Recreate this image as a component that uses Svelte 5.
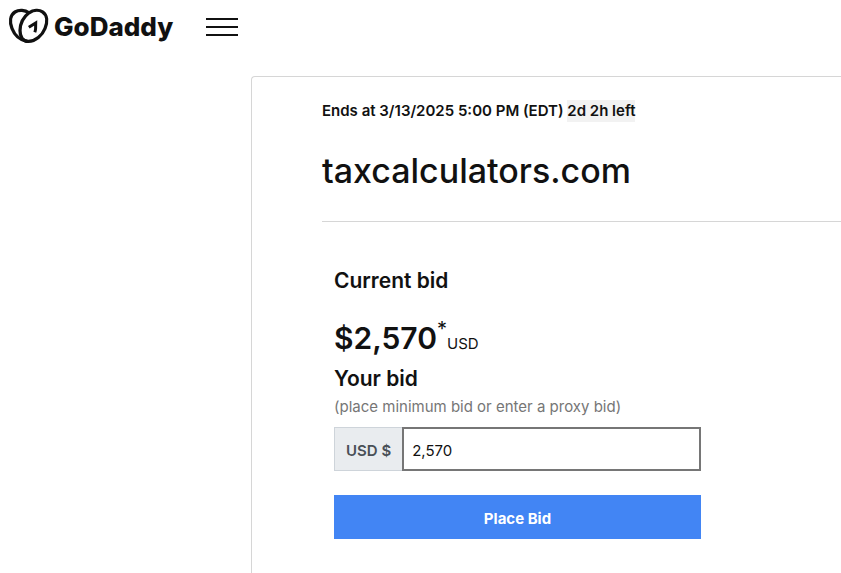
<script>
  let bid = '2,570'
</script>

<header>
  <a class="logo" href="/" aria-label="GoDaddy">
    <svg width="41" height="36" viewBox="0 0 41 36" fill="none" stroke="#111" stroke-width="3.300">
      <path d="M21 4.800C17 2 11 1.500 7 4C2 7.200 1.500 14 4 20.500C6.300 26.500 11.500 32 19 33.300" />
      <path d="M20.500 33.400C15 33.400 11.900 29 12 22.500C12.200 15.500 15.500 9 21 4.800C25.500 1.800 31 1.500 34.500 3.800C39.500 7.100 39.600 14 37 20.500C34.200 27.500 27.500 33.400 20.500 33.400Z" />
      <path d="M20.800 19.300L27.700 15L27.600 20.500C27.500 22 27.300 23 26.800 24.300" stroke-width="3" />
    </svg>
    <span>GoDaddy</span>
  </a>
  <button class="menu" aria-label="Menu">
    <i></i><i></i><i></i>
  </button>
</header>

<main>
  <div class="ends">Ends at 3/13/2025 5:00 PM (EDT) <mark>2d 2h left</mark></div>
  <h1>taxcalculators.com</h1>
  <hr />
  <form on:submit|preventDefault>
    <h2>Current bid</h2>
    <div class="price">
      <strong>$2,570</strong><span class="star">*</span><span class="currency">USD</span>
    </div>
    <h2><label for="bid">Your bid</label></h2>
    <p>(place minimum bid or enter a proxy bid)</p>
    <div class="group">
      <span class="prefix">USD $</span>
      <input id="bid" type="text" bind:value={bid} />
    </div>
    <button class="place">Place Bid</button>
  </form>
</main>

<style>
  :global(body) {
    background: #fff;
    color: #111;
    font-family: Inter, "Liberation Sans", sans-serif;
    font-size: 15px;
    overflow-x: hidden;
  }
  header {
    display: flex;
    align-items: center;
    gap: 33px;
    height: 54px;
    padding-left: 8px;
  }
  .logo {
    display: flex;
    align-items: center;
    gap: 5px;
    color: #111;
    text-decoration: none;
    font-size: 26px;
    font-weight: 800;
    line-height: 32px;
  }
  .logo svg {
    margin-bottom: 2px;
  }
  .menu {
    display: flex;
    flex-direction: column;
    gap: 6px;
    width: 32px;
    padding: 0;
    border: 0;
    background: none;
  }
  .menu i {
    height: 2px;
    width: 100%;
    background: #111;
  }
  main {
    box-sizing: border-box;
    min-height: calc(100vh - 76px);
    margin: 22px 0 0 251px;
    padding: 22px 0 32px 70px;
    border: 1px solid #d6d6d6;
    border-right: 0;
    border-bottom: 0;
    border-top-left-radius: 4px;
  }
  .ends {
    font-weight: 600;
    line-height: 24px;
    white-space: nowrap;
  }
  mark {
    display: inline-block;
    line-height: 22px;
    background: #f2f2f2;
    color: inherit;
  }
  h1 {
    margin: 24px 0 26px;
    font-size: 34px;
    font-weight: 500;
    line-height: 48px;
  }
  hr {
    height: 1px;
    margin: 0;
    border: 0;
    background: #d6d6d6;
  }
  form {
    max-width: 367px;
    padding: 44px 12px 0;
  }
  h2 {
    margin: 0;
    font-size: 21px;
    font-weight: 600;
    line-height: 30px;
  }
  .price {
    display: flex;
    align-items: baseline;
    margin-top: 22px;
    line-height: 40px;
  }
  .price strong {
    font-size: 30px;
    font-weight: 600;
  }
  .star {
    align-self: flex-start;
    font-size: 20px;
    line-height: 22px;
  }
  .currency {
    font-size: 15px;
  }
  p {
    margin: 2px 0 9px;
    color: #767676;
    line-height: 22px;
  }
  .group {
    display: flex;
    height: 44px;
  }
  .prefix {
    display: flex;
    align-items: center;
    padding: 2px 11px 0;
    border: 1px solid #ced4da;
    border-right: 0;
    background: #e9ecef;
    color: #495057;
    font-weight: 600;
  }
  input {
    flex: 1;
    min-width: 0;
    padding: 2px 8px 0;
    border: 2px solid #767676;
    border-radius: 0;
    color: #111;
    font: inherit;
  }
  .place {
    width: 100%;
    height: 44px;
    margin-top: 24px;
    padding: 2px 0 0;
    border: 0;
    background: #4285f4;
    color: #fff;
    font: inherit;
    font-weight: 700;
  }
</style>
